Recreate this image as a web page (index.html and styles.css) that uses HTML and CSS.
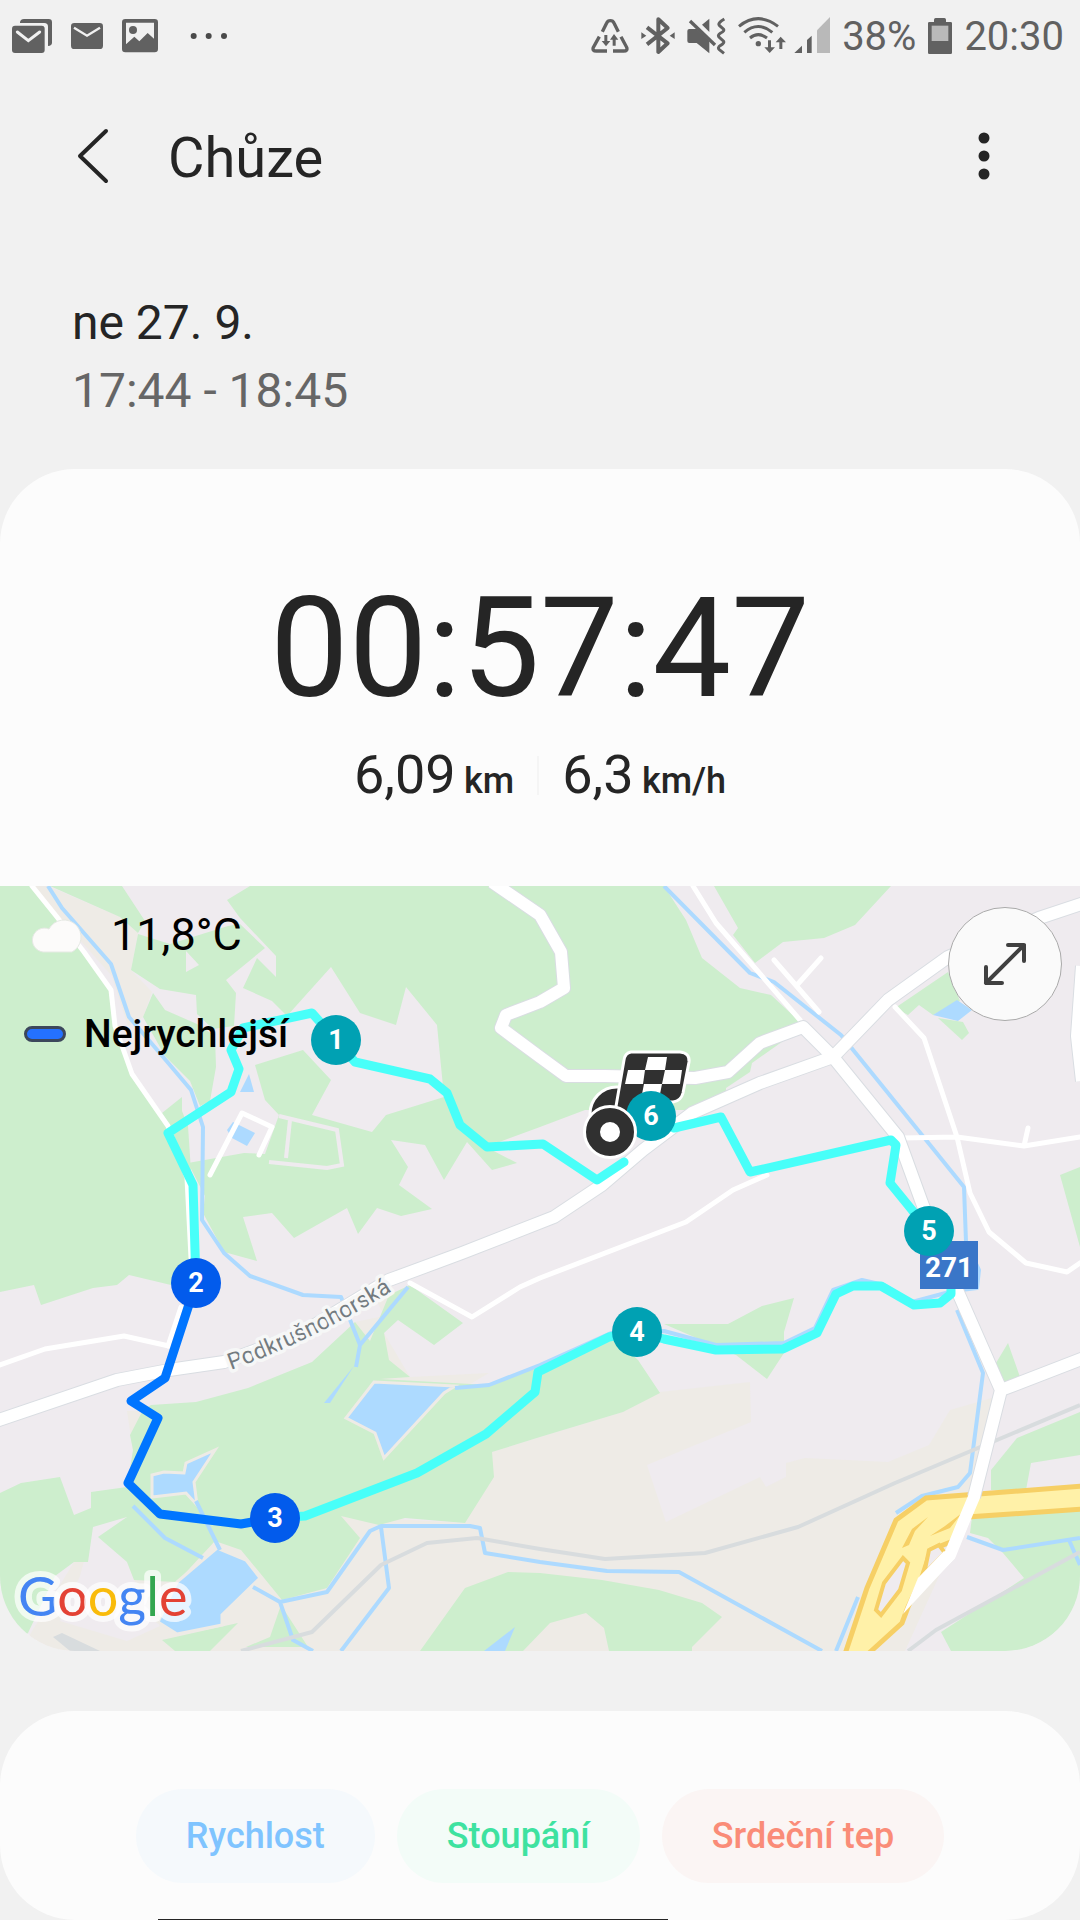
FILE: index.html
```html
<!DOCTYPE html>
<html lang="cs">

<head>
    <meta charset="UTF-8">
    <meta name="viewport" content="width=device-width, initial-scale=1.0">
    <title>Chůze</title>
    <link rel="stylesheet" href="styles.css">
</head>

<body>

    <!-- status bar -->
    <div class="status">
        <div class="status-left">
            <svg width="40" height="40" viewBox="36 48 120 120">
                <path d="M60 66Q62 57 72 57H146Q156 57 156 67V128Q156 137 144 138V80Q144 69 133 69H60Z" fill="#616161"/>
                <rect x="36" y="77" width="98" height="82" rx="9" fill="#616161"/>
                <path d="M52 96L85 122L119 96" fill="none" stroke="#f1f1f1" stroke-width="9" stroke-linecap="round"/>
            </svg>
            <svg width="32" height="40" viewBox="210 48 96 120">
                <rect x="210" y="69" width="96" height="78" rx="10" fill="#616161"/>
                <path d="M219 83L258 107L297 83" fill="none" stroke="#f1f1f1" stroke-width="7"/>
            </svg>
            <svg width="36" height="40" viewBox="366 48 108 120">
                <path fill-rule="evenodd" d="M376 57H464Q474 57 474 67V147Q474 157 464 157H376Q366 157 366 147V67Q366 57 376 57ZM378 68V133L403 110L418 124L443 99L462 116V68Z" fill="#616161"/>
                <circle cx="399" cy="90" r="12" fill="#616161"/>
            </svg>
            <svg class="more-notif" width="38" height="40" viewBox="570 48 114 120" fill="#4a4a4a">
                <circle cx="581" cy="108" r="9"/><circle cx="626" cy="108" r="9"/><circle cx="672" cy="108" r="9"/>
            </svg>
        </div>
        <div class="status-right">
            <svg width="38" height="40" viewBox="60 48 114 120">
                <path d="M94 95L107 69Q110 62 118 62T129 69L142 95M85 110L67 142Q63 153 76 153H108M126 153H158Q171 153 167 142L150 110" fill="none" stroke="#616161" stroke-width="10"/>
                <path d="M100 105H109V123H118L105 139L92 123H100ZM125 137V119H117L129 102L142 119H134V137Z" fill="#616161"/>
            </svg>
            <svg width="34" height="40" viewBox="207 48 102 120">
                <path d="M225 82L287 130L259 156V58L287 84L225 133" fill="none" stroke="#616161" stroke-width="12" stroke-linejoin="round"/>
                <path d="M208 97L223 107L208 117ZM308 97L293 107L308 117Z" fill="#616161"/>
            </svg>
            <svg width="39" height="40" viewBox="347 48 117 120">
                <path d="M354 87H376L414 124V160L376 129H354Q348 129 348 123V93Q348 87 354 87ZM392 74L414 56V96Z" fill="#616161"/>
                <path d="M356 63L431 135" stroke="#616161" stroke-width="10"/>
                <path d="M459 57Q438 69 444 76L456 87Q461 93 448 99Q437 106 444 112L456 123Q461 129 448 136Q437 143 444 149L458 160" fill="none" stroke="#616161" stroke-width="9"/>
            </svg>
            <svg width="48" height="40" viewBox="510 48 144 120">
                <path d="M513 79Q570 33 630 79M529 97Q570 62 613 97M546 114Q570 94 597 114" fill="none" stroke="#616161" stroke-width="9"/>
                <circle cx="571" cy="131" r="8" fill="#616161"/>
                <path d="M600 121H609V142H621L605 159L589 142H600ZM634 147V127H623L638 110L654 127H643V147Z" fill="#616161"/>
            </svg>
            <svg class="signal" width="36" height="40" viewBox="672 48 108 120">
                <path d="M673 159L696 137V159ZM711 159V120L725 107V159Z" fill="#616161"/>
                <path d="M741 159V91L780 51V159Z" fill="#b9b9b9"/>
            </svg>
            <span>38%</span>
            <svg width="24" height="40" viewBox="1074 48 72 120">
                <path d="M1092 66V59Q1092 54 1097 54H1123Q1128 54 1128 59V66H1142Q1146 66 1146 70V158Q1146 162 1142 162H1078Q1074 162 1074 158V70Q1074 66 1078 66Z" fill="#616161"/>
                <rect x="1085" y="77" width="50" height="46" fill="#b9b9b9"/>
            </svg>
            <span>20:30</span>
        </div>
    </div>

    <!-- title bar -->
    <header class="appbar">
        <button class="icon-btn" aria-label="Zpět">
            <svg width="40" height="60" viewBox="0 0 40 60">
                <path d="M34 5L8 30L34 55" fill="none" stroke="#252525" stroke-width="4" stroke-linecap="round" stroke-linejoin="round"/>
            </svg>
        </button>
        <h1>Chůze</h1>
        <button class="icon-btn" aria-label="Další možnosti">
            <svg width="40" height="60" viewBox="0 0 40 60" fill="#252525">
                <circle cx="20" cy="12" r="5.5"/><circle cx="20" cy="30" r="5.5"/><circle cx="20" cy="48" r="5.5"/>
            </svg>
        </button>
    </header>

    <div class="date">
        <p>ne 27. 9.</p>
        <p class="time">17:44 - 18:45</p>
    </div>

    <!-- summary + map -->
    <section class="card">
        <div class="summary">
            <div class="duration">00:57:47</div>
            <div class="stats">
                <span class="stat">6,09 <small>km</small></span>
                <i class="divider"></i>
                <span class="stat">6,3 <small>km/h</small></span>
            </div>
        </div>

        <div class="map">
            <svg class="map-canvas" viewBox="0 0 1080 765" preserveAspectRatio="xMidYMid slice">
                <rect width="1080" height="765" fill="#efebef"/>

                <!-- fields -->
                <g fill="#eeebe6">
                    <path d="M32 0L48 0L120 31L138 47L131 84L152 106L143 131L128 140L112 90Z"/>
                    <path d="M492 566L540 551L623 526L660 506L750 496L751 536L647 579L666 636L760 591L766 601L786 591V577L805 572L888 576L929 559L950 524L995 511L975 611L905 765H20L74 676L127 676L341 630L465 637Z"/>
                    <path d="M384 430L375 411L389 405L384 447L410 491L489 487L450 510L360 500L330 470L355 436ZM127 525H145L133 564Z"/>
                </g>
                <path d="M93 641L127 631L98 651L127 676L134 694L160 740L127 755L60 735L80 690Z" fill="#efebef"/>

                <!-- woods -->
                <g fill="#cdeecd">
                    <path d="M0 0H32L60 35L111 104L116 150L132 189L162 227L182 211V225L188 240L192 300L190 371L171 399L129 389L117 399L93 402L41 419L34 399L0 406Z"/>
                    <path d="M50 0H122L145 35L138 47L120 31Z"/>
                    <path d="M138 48L170 58L228 40L240 38L265 62L226 94L236 107L234 140L213 143L197 128L196 109L160 103L131 84Z"/>
                    <path d="M153 107L165 124L197 138L215 150L216 181L210 215L200 220L190 195L165 170L143 131Z"/>
                    <path d="M250 0L227 14L240 32L276 70V91L257 72L243 102L272 115L287 130L331 81L360 127L396 139L406 101L437 139L444 211L386 229L372 246L312 229L331 194L303 164L255 179L265 214L279 229L265 268L244 267L188 277L205 310L203 327L224 366L257 375L243 331L272 327L294 352L347 322L358 348L377 322L401 330L432 323L399 299L408 281L391 254L425 259L444 294L467 256L492 284L517 277L486 261L540 241L585 224L688 224L726 207V202L750 186L752 177L803 141L798 134L771 109L740 102L702 72L686 34L664 0Z"/>
                    <path d="M714 0H891L855 39L824 52L783 56L755 77L733 49L738 42Z"/>
                    <path d="M895 122L948 86L960 115L933 129L919 119L908 129ZM938 132L963 136L969 147L962 154ZM1060 289L1080 281V361Z"/>
                    <path d="M151 519L196 516L248 502L312 476L355 436L370 455L389 409L410 399L463 437L434 459L398 434L384 447L389 474L410 491L380 493L489 499L540 480L611 449L638 474L660 507L623 526L540 551L492 566L494 591L465 637L405 632L379 639L341 630L360 652L327 702L282 714L260 687L241 664L215 655L177 696L134 694L127 676L98 651L127 631L93 641L88 676H74L55 690L28 747L0 765V607L21 597L60 591L74 629L91 622V606L127 601L133 564L130 549L143 524Z"/>
                    <path d="M162 754L220 741L238 737L210 765H175ZM281 719L308 761H246L270 751Z"/>
                    <path d="M420 765L465 702L508 686L540 687L602 694L659 704L702 717L722 731L692 761V765H609L604 742L586 727L550 737L523 765Z"/>
                    <path d="M664 438H728L762 420L794 412L784 446V467L767 493L736 469Z"/>
                    <path d="M991 584L1017 552L1080 526V569L1031 577L1026 604H991ZM996 477L1008 457L1020 491L1003 499Z"/>
                    <path d="M972 631L1080 622V765H951L941 746L1024 692L1003 667L988 652L970 647Z"/>
                </g>
                <path d="M186 65L199 79L186 86Z" fill="#efebef"/>
                <path d="M279 230L337 244L342 279L327 282L269 276M290 234L286 272" fill="none" stroke="#efebef" stroke-width="4"/>

                <!-- water -->
                <g fill="#addaff" stroke="#eeebe6" stroke-width="3">
                    <path d="M374 496L455 500L444 507L384 572L375 547L346 532Z"/>
                    <path d="M152 589L164 586L184 587L186 577L215 564L194 596L197 619L186 607L152 611Z"/>
                    <path d="M217 662L246 674L260 692L222 729V739L177 748L158 736L177 696Z"/>
                </g>
                <path d="M249 188L240 206H254ZM227 244L233 236L255 247L247 260L232 252ZM933 129L957 114L972 124L958 135ZM515 741L484 765H505ZM324 517L354 480L330 517Z" fill="#addaff"/>
                <g class="stream">
                    <path d="M48 0L62 22L111 78L129 131L164 172L191 204L203 241L202 334L224 367L250 390L303 409L341 411L360 459L356 481M408 401L360 459"/>
                    <path d="M664 0L750 87L774 96L841 149L922 249L964 301L966 356L979 384L977 402L953 405L912 416L884 399L862 394L833 404L815 442L784 457L716 459L664 445L611 447L540 479L489 499L455 502"/>
                    <path d="M957 424L983 487L970 587L958 601L922 610L896 627M858 711L836 765M967 651L1003 664L1080 652M1069 654L1080 679"/>
                    <path d="M133 620L165 652L203 672M196 615L220 664M253 701L280 716L327 706L370 645L381 640H470L480 642L485 667L540 676L607 685L679 686L822 765M280 716L293 754L313 765M381 641L389 702L341 765"/>
                </g>

                <!-- railway -->
                <path class="rail" d="M241 765L312 746L381 679L427 657L477 652L540 663L605 673L705 667L798 641L895 597L1080 519M908 765L936 744L1080 666"/>
                <path d="M53 751L62 747L100 765H70Z" fill="#d8dcde"/>

                <!-- motorway -->
                <g fill="#fff1a8" stroke="#f6cf65" stroke-width="5">
                    <path d="M1084 600L926 612L896 634L867 702L845 768H868L902 737L908 721L922 691L931 664L953 655L968 631L1084 623Z"/>
                    <path d="M903 672L908 677L900 704L881 729L876 724L884 697ZM924 688L929 664L939 659L945 667Z" fill="#efebef" stroke-width="4"/>
                    <path d="M902 662L912 643L928 631L915 645L909 659ZM930 650L945 640L962 627L950 642Z" fill="#f6cf65" stroke="none"/>
                </g>

                <!-- roads -->
                <g class="lane">
                    <path d="M32 0L57 31L84 66L111 104L115 140L132 188L168 240L187 292L191 372M181 421L168 460"/>
                    <path d="M693 0L716 37L800 134M774 74L819 126M821 72L797 99"/>
                    <path d="M895 121L924 152L957 251L970 307L989 346L1026 377L1067 386L1080 377M902 252L957 251L1024 260L1080 251M1024 260L1028 242"/>
                    <path d="M767 289L733 304L686 336L540 392L520 401L472 431L410 397M0 479L45 463L124 450L169 460M210 289L242 227L272 241L259 269"/>
                </g>
                <g class="road-edge">
                    <path d="M1084 17L1039 32L948 71L888 114L833 171L760 197L692 227L643 264L602 299L554 331L462 367L389 394L300 448L224 476L169 484L117 494L-4 535"/>
                    <path d="M492 -4L540 29L561 66L564 102L540 116L506 129L501 142L540 171L566 190H605L695 192L728 186L760 157L803 141L833 171L898 251L922 317L957 404L1001 504L974 611M1001 504L1084 472M1082 80L1077 150L1082 195"/>
                </g>
                <g class="road">
                    <path d="M1084 17L1039 32L948 71L888 114L833 171L760 197L692 227L643 264L602 299L554 331L462 367L389 394L300 448L224 476L169 484L117 494L-4 535"/>
                    <path d="M492 -4L540 29L561 66L564 102L540 116L506 129L501 142L540 171L566 190H605L695 192L728 186L760 157L803 141L833 171L898 251L922 317L957 404L1001 504L974 611L963 637L950 669L922 697M1001 504L1084 472M1082 80L1077 150L1082 195"/>
                </g>
                <path d="M944 665L955 672L903 728L918 692Z" fill="#fff"/>

                <path id="street" d="M231 484Q314 454 392 405" fill="none"/>
                <text class="street"><textPath href="#street">Podkrušnohorská</textPath></text>

                <!-- track -->
                <path class="track" d="M624 276L597 294L543 258L487 261L460 239L447 207L430 193L355 176L336 154L312 127L243 142L231 164L239 183L231 206L168 247L193 299L196 397"/>
                <path class="track" d="M275 632L305 630L417 587L486 548L535 506L538 486L609 451L637 446L664 453L716 464L783 463L817 447L836 408L853 400H881L914 419L940 417L951 408V400"/>
                <path class="track" d="M929 346L912 324L890 297L896 259L891 254L750 286L721 231L674 242L651 230"/>
                <path class="track fastest" d="M196 397L165 492L131 515L158 532L128 597L160 628L241 638L275 632"/>

                <!-- road sign -->
                <rect x="920" y="355" width="58" height="48" fill="#3a76c8"/>
                <text class="sign" x="949" y="391">271</text>

                <!-- start and finish -->
                <g fill="#303030" stroke="#fff" stroke-width="3">
                    <circle cx="617" cy="228" r="27"/>
                    <path d="M631 166H680Q690 167 689 176L683 207Q681 215 673 216H645L640 240L614 232L624 174Q625 167 631 166Z"/>
                </g>
                <path d="M648 171H667L665 184H682L680 198H662L660 208H642L644 198H625L628 184H645ZM645 184L643 198H662L665 184Z" fill="#fff" fill-rule="evenodd"/>

                <g class="marker">
                    <circle cx="336" cy="154" r="25"/><text x="336" y="163">1</text>
                    <circle cx="637" cy="446" r="25"/><text x="637" y="455">4</text>
                    <circle cx="929" cy="345" r="25"/><text x="929" y="354">5</text>
                    <circle cx="651" cy="230" r="25"/><text x="651" y="239">6</text>
                </g>
                <g class="marker fast">
                    <circle cx="196" cy="397" r="25"/><text x="196" y="406">2</text>
                    <circle cx="275" cy="632" r="25"/><text x="275" y="641">3</text>
                </g>
                <circle cx="610" cy="246" r="18" fill="#fff" stroke="#fff" stroke-width="18"/>
                <circle cx="610" cy="246" r="17" fill="#fff" stroke="#303030" stroke-width="14"/>

                <text class="google" x="18" y="730"><tspan fill="#4485f3">G</tspan><tspan fill="#e34234">o</tspan><tspan fill="#f9bb0b">o</tspan><tspan fill="#4485f3">g</tspan><tspan fill="#34a650">l</tspan><tspan fill="#e34234">e</tspan></text>
            </svg>

            <div class="legend">
                <div class="legend-row">
                    <svg class="cloud" width="54" height="38" viewBox="0 0 54 38">
                        <path d="M13 37A12 12 0 1 1 19 14A17 17 0 1 1 42 37Z" fill="#fcfbfa" stroke="#e6e9e4" stroke-width="1"/>
                    </svg>
                    <span class="temp">11,8°C</span>
                </div>
                <div class="legend-row">
                    <i class="pill"></i>
                    <span class="fastest-label">Nejrychlejší</span>
                </div>
            </div>

            <button class="expand" aria-label="Zvětšit mapu">
                <svg width="44" height="44" viewBox="0 0 44 44">
                    <path d="M3 41L41 3M25 3H41V19M3 25V41H19" fill="none" stroke="#404040" stroke-width="4" stroke-linecap="round" stroke-linejoin="round"/>
                </svg>
            </button>
        </div>
    </section>

    <!-- chart switches -->
    <section class="card chips">
        <button class="chip speed">Rychlost</button>
        <button class="chip climb">Stoupání</button>
        <button class="chip pulse">Srdeční tep</button>
    </section>

    <div class="toast"></div>

</body>

</html>
```
FILE: styles.css
```css
* {
    box-sizing: border-box;
}

body {
    margin: 0;
    background: #f1f1f1;
    color: #252525;
    font-family: Roboto, "Liberation Sans", sans-serif;
}

p, h1 {
    margin: 0;
    font-weight: 400;
}

svg {
    display: block;
}

button {
    border: none;
    padding: 0;
    background: transparent;
    font-family: inherit;
}

/* status bar */
.status {
    display: flex;
    justify-content: space-between;
    height: 72px;
    padding: 0 16px 0 12px;
    color: #616161;
    font-size: 40px;
}

.status-left, .status-right {
    display: flex;
    align-items: center;
}

.status-left {
    gap: 19px;
}

.more-notif {
    margin-left: 13px;
}

.status-right {
    gap: 12px;
}

.signal {
    margin-left: -4px;
}

/* title bar */
.appbar {
    display: flex;
    align-items: center;
    height: 168px;
    padding: 0 76px 0 72px;
}

.appbar h1 {
    flex: 1;
    margin-left: 56px;
    padding-top: 4px;
    font-size: 56px;
}

.date {
    padding: 49px 72px 44px;
    font-size: 48px;
    line-height: 68px;
}

.time {
    color: #666;
}

/* cards */
.card {
    border-radius: 75px;
    background: #fcfcfc;
    overflow: hidden;
}

.summary {
    padding: 95px 0 79px;
    text-align: center;
}

.duration {
    font-size: 140px;
    line-height: 168px;
}

.stats {
    display: flex;
    align-items: center;
    justify-content: center;
    gap: 23px;
    margin-top: 11px;
    font-size: 54px;
    line-height: 64px;
}

.stat small {
    margin-left: -5px;
    font-size: 36px;
    font-weight: 500;
    line-height: 1;
}

.divider {
    width: 2px;
    height: 39px;
    background: #f5f5f5;
}

/* map */
.map {
    position: relative;
    aspect-ratio: 1080 / 765;
}

.map-canvas {
    width: 100%;
    height: 100%;
}

.stream, .rail, .lane, .road, .road-edge, .track {
    fill: none;
    stroke-linejoin: round;
}

.stream {
    stroke: #addaff;
    stroke-width: 4;
}

.rail {
    stroke: #d8dcde;
    stroke-width: 4;
}

.lane {
    stroke: #fff;
    stroke-width: 5;
    stroke-linecap: round;
}

.road-edge {
    stroke: #d9dde2;
    stroke-width: 14;
}

.road {
    stroke: #fff;
    stroke-width: 12;
}

.track {
    stroke: #48fff9;
    stroke-width: 9;
    stroke-linecap: round;
}

.track.fastest {
    stroke: #0075ff;
}

.street {
    font-size: 23px;
    fill: #737b80;
    stroke: #f6f7f7;
    stroke-width: 7px;
    stroke-linejoin: round;
    paint-order: stroke;
}

.sign {
    font-size: 28px;
    font-weight: 700;
    fill: #fff;
    text-anchor: middle;
}

.marker {
    font-size: 27px;
    font-weight: 700;
    text-anchor: middle;
    fill: #00a1b3;
}

.marker.fast {
    fill: #025bec;
}

.marker text {
    fill: #fff;
}

.google {
    font-family: Lato, sans-serif;
    font-size: 54px;
    font-weight: 400;
    stroke: rgba(255, 255, 255, .7);
    stroke-width: 12px;
    stroke-linejoin: round;
    paint-order: stroke;
}

.legend {
    position: absolute;
    top: 20px;
    left: 24px;
    color: #000;
}

.legend-row {
    display: flex;
    align-items: center;
    height: 56px;
}

.legend-row + .legend-row {
    margin-top: 44px;
}

.cloud {
    margin-left: 6px;
}

.temp {
    margin-left: 27px;
    font-size: 45px;
}

.pill {
    width: 42px;
    height: 16px;
    border: 3px solid #3c475c;
    border-radius: 8px;
    background: #2471ff;
}

.fastest-label {
    margin-left: 18px;
    font-size: 39px;
    font-weight: 500;
}

.expand {
    position: absolute;
    top: 21px;
    right: 18px;
    display: flex;
    align-items: center;
    justify-content: center;
    width: 114px;
    height: 114px;
    border: 1px solid #aaa;
    border-radius: 50%;
    background: #fafafa;
}

/* chart switches */
.chips {
    display: flex;
    justify-content: center;
    gap: 22px;
    margin-top: 60px;
    padding: 78px 0 37px;
}

.chip {
    height: 94px;
    padding: 0 50px;
    border-radius: 47px;
    font-size: 36px;
    font-weight: 500;
}

.speed {
    background: #f5f9fc;
    color: #7fc4ff;
}

.climb {
    background: #f3fcf8;
    color: #3ee2a0;
}

.pulse {
    background: #fbf5f4;
    color: #fa8c78;
}

/* top edge of the message sliding in from below */
.toast {
    position: fixed;
    bottom: 0;
    left: 158px;
    width: 510px;
    height: 1px;
    background: #252525;
}
```
